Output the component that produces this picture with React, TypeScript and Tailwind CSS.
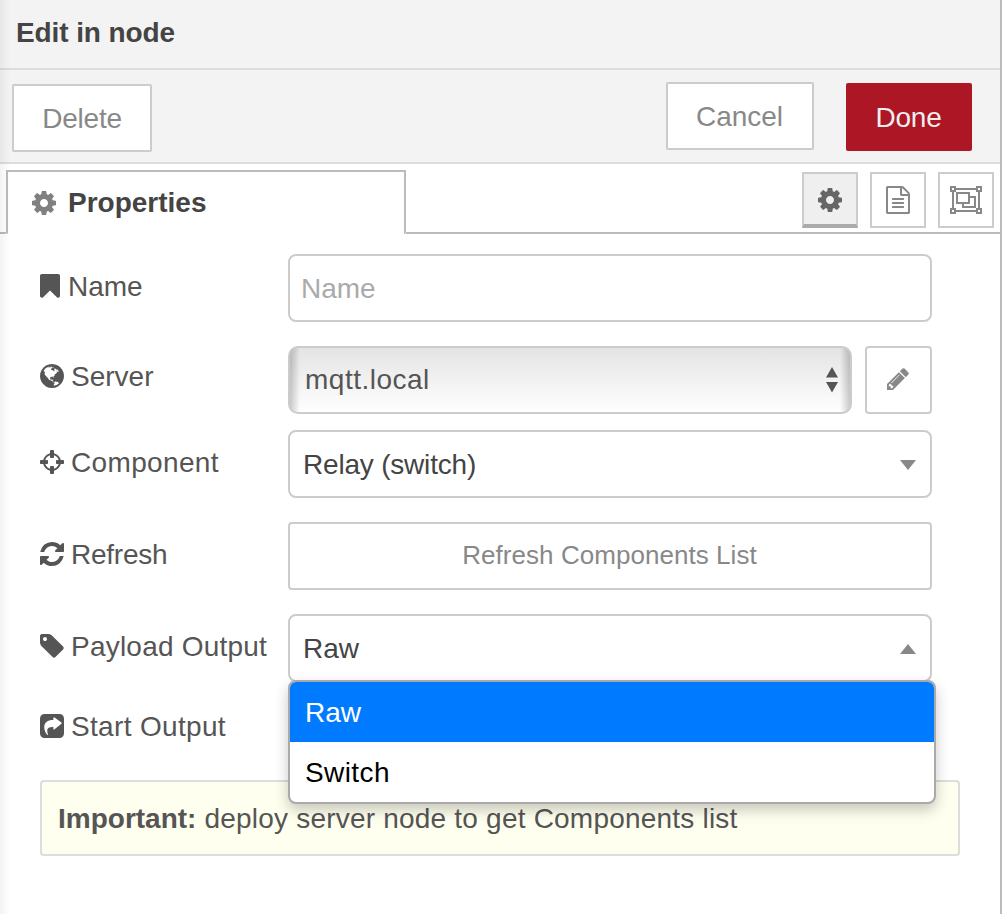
import React from "react";

const P = {
  cog: "M1152 896q0-106-75-181t-181-75-181 75-75 181 75 181 181 75 181-75 75-181zm512-109v222q0 12-8 23t-20 13l-185 28q-19 54-39 91 35 50 107 138 10 12 10 25t-9 23q-27 37-99 108t-94 71q-12 0-26-9l-138-108q-44 23-91 38-16 136-29 186-7 28-36 28h-222q-14 0-24.5-8.5t-11.5-21.5l-28-184q-49-16-90-37l-141 107q-10 9-25 9-14 0-25-11-126-114-165-168-7-10-7-23 0-12 8-23 15-21 51-66.5t54-70.5q-27-50-41-99l-183-27q-13-2-21-12.5t-8-23.5v-222q0-12 8-23t19-13l186-28q14-46 39-92-40-57-107-138-10-12-10-24 0-10 9-23 26-36 98.5-107.5t94.5-71.5q13 0 26 10l138 107q44-23 91-38 16-136 29-186 7-28 36-28h222q14 0 24.5 8.5t11.5 21.5l28 184q49 16 90 37l142-107q9-9 24-9 13 0 25 10 129 119 165 170 7 8 7 22 0 12-8 23-15 21-51 66.5t-54 70.5q26 50 41 98l183 28q13 2 21 12.5t8 23.5z",
  bookmark: "M1420 128q23 0 44 9 33 13 52.5 41t19.5 62v1289q0 34-19.5 62t-52.5 41q-19 8-44 8-48 0-83-32l-441-424-441 424q-36 33-83 33-23 0-44-9-33-13-52.5-41t-19.5-62v-1289q0-34 19.5-62t52.5-41q21-9 44-9h1048z",
  globe: "M896 128q209 0 385.5 103t279.5 279.5 103 385.5-103 385.5-279.5 279.5-385.5 103-385.5-103-279.5-279.5-103-385.5 103-385.5 279.5-279.5 385.5-103zm274 521q-2 1-9.5 9.5t-13.5 9.5q2 0 4.5-5t5-11 3.5-7q6-7 22-15 14-6 52-12 34-8 51 11-2-2 9.5-13t14.5-12q3-2 15-4.5t15-7.5l2-22q-12 1-17.5-7t-6.5-21q0 2-6 8 0-7-4.5-8t-11.5 1-9 1q-10-3-15-7.5t-8-16.5-4-15q-2-5-9.5-11t-9.5-10q-1-2-2.5-5.5t-3-6.5-4-5.5-5.5-2.5-7 5-7.5 10-4.5 5q-3-2-6-1.5t-4.5 1-4.5 3-5 3.5q-3 2-8.5 3t-8.5 2q15-5-1-11-10-4-16-3 9-4 7.5-12t-8.5-14h5q-1-4-8.5-8.5t-17.5-8.5-13-6q-8-5-34-9.5t-33-.5q-5 6-4.5 10.5t4 14 3.5 12.5q1 6-5.5 13t-6.5 12q0 7 14 15.5t10 21.5q-3 8-16 16t-16 12q-5 8-1.5 18.5t10.5 16.5q2 2 1.5 4t-3.5 4.5-5.5 4-6.5 3.5l-3 2q-11 5-20.5-6t-13.5-26q-7-25-16-30-23-8-29 1-5-13-41-26-25-9-58-4 6-1 0-15-7-15-19-12 3-6 4-17.5t1-13.5q3-13 12-23 1-1 7-8.5t9.5-13.5.5-6q35 4 50-11 5-5 11.5-17t10.5-17q9-6 14-5.5t14.5 5.5 14.5 5q14 1 15.5-11t-7.5-20q12 1 3-17-4-7-8-9-12-4-27 5-8 4 2 8-1-1-9.5 10.5t-16.5 17.5-16-5q-1-1-5.5-13.5t-9.5-13.5q-8 0-16 15 3-8-11-15t-24-8q19-12-8-27-7-4-20.5-5t-19.5 4q-5 7-5.5 11.5t5 8 10.5 5.5 11.5 4 8.5 3q14 10 8 14-2 1-8.5 3.5t-11.5 4.5-6 4q-3 4 0 14t-2 14q-5-5-9-17.5t-7-16.5q7 9-25 6l-10-1q-4 0-16 2t-20.5 1-13.5-8q-4-8 0-20 1-4 4-2-4-3-11-9.5t-10-8.5q-46 15-94 41 6 1 12-1 5-2 13-6.5t10-5.5q34-14 42-7l5-5q14 16 20 25-7-4-30-1-20 6-22 12 7 12 5 18-4-3-11.5-10t-14.5-11-15-5q-16 0-22 1-146 80-235 222 7 7 12 8 4 1 5 9t2.5 11 11.5-3q9 8 3 19 1-1 44 27 19 17 21 21 3 11-10 18-1-2-9-9t-9-4q-3 5 .5 18.5t10.5 12.5q-7 0-9.5 16t-2.5 35.5-1 23.5l2 1q-3 12 5.5 34.5t21.5 19.5q-13 3 20 43 6 8 8 9 3 2 12 7.5t15 10 10 10.5q4 5 10 22.5t14 23.5q-2 6 9.5 20t10.5 23q-1 0-2.5 1t-2.5 1q3 7 15.5 14t15.5 13q1 3 2 10t3 11 8 2q2-20-24-62-15-25-17-29-3-5-5.5-15.5t-4.5-14.5q2 0 6 1.5t8.5 3.5 7.5 4 2 3q-3 7 2 17.5t12 18.5 17 19 12 13q6 6 14 19.5t0 13.5q9 0 20 10.5t17 19.5q5 8 8 26t5 24q2 7 8.5 13.5t12.5 9.5l16 8 13 7q5 2 18.5 10.5t21.5 11.5q10 4 16 4t14.5-2.5 13.5-3.5q15-2 29 15t21 21q36 19 55 11-2 1 .5 7.5t8 15.5 9 14.5 5.5 8.5q5 6 18 15t18 15q6-4 7-9-3 8 7 20t18 10q14-3 14-32-31 15-49-18 0-1-2.5-5.5t-4-8.5-2.5-8.5 0-7.5 5-3q9 0 10-3.5t-2-12.5-4-13q-1-8-11-20t-12-15q-5 9-16 8t-16-9q0 1-1.5 5.5t-1.5 6.5q-13 0-15-1 1-3 2.5-17.5t3.5-22.5q1-4 5.5-12t7.5-14.5 4-12.5-4.5-9.5-17.5-2.5q-19 1-26 20-1 3-3 10.5t-5 11.5-9 7q-7 3-24 2t-24-5q-13-8-22.5-29t-9.5-37q0-10 2.5-26.5t3-25-5.5-24.5q3-2 9-9.5t10-10.5q2-1 4.5-1.5t4.5 0 4-1.5 3-6q-1-1-4-3-3-3-4-3 7 3 28.5-1.5t27.5 1.5q15 11 22-2 0-1-2.5-9.5t-.5-13.5q5 27 29 9 3 3 15.5 5t17.5 5q3 2 7 5.5t5.5 4.5 5-.5 8.5-6.5q10 14 12 24 11 40 19 44 7 3 11 2t4.5-9.5 0-14-1.5-12.5l-1-8v-18l-1-8q-15-3-18.5-12t1.5-18.5 15-18.5q1-1 8-3.5t15.5-6.5 12.5-8q21-19 15-35 7 0 11-9-1 0-5-3t-7.5-5-4.5-2q9-5 2-16 5-3 7.5-11t7.5-10q9 12 21 2 8-8 1-16 5-7 20.5-10.5t18.5-9.5q7 2 8-2t1-12 3-12q4-5 15-9t13-5l17-11q3-4 0-4 18 2 31-11 10-11-6-20 3-6-3-9.5t-15-5.5q3-1 11.5-.5t10.5-1.5q15-10-7-16-17-5-43 12zm-163 877q206-36 351-189-3-3-12.5-4.5t-12.5-3.5q-18-7-24-8 1-7-2.5-13t-8-9-12.5-8-11-7q-2-2-7-6t-7-5.5-7.5-4.5-8.5-2-10 1l-3 1q-3 1-5.5 2.5t-5.5 3-4 3 0 2.5q-21-17-36-22-5-1-11-5.5t-10.5-7-10-1.5-11.5 7q-5 5-6 15t-2 13q-7-5 0-17.5t2-18.5q-3-6-10.5-4.5t-12 4.5-11.5 8.5-9 6.5-8.5 5.5-8.5 7.5q-3 4-6 12t-5 11q-2-4-11.5-6.5t-9.5-5.5q2 10 4 35t5 38q7 31-12 48-27 25-29 40-4 22 12 26 0 7-8 20.5t-7 21.5q0 6 2 16z",
  crosshairs: "M1325 1024h-109q-26 0-45-19t-19-45v-128q0-26 19-45t45-19h109q-32-108-112.5-188.5t-188.5-112.5v109q0 26-19 45t-45 19h-128q-26 0-45-19t-19-45v-109q-108 32-188.5 112.5t-112.5 188.5h109q26 0 45 19t19 45v128q0 26-19 45t-45 19h-109q32 108 112.5 188.5t188.5 112.5v-109q0-26 19-45t45-19h128q26 0 45 19t19 45v109q108-32 188.5-112.5t112.5-188.5zm339-192v128q0 26-19 45t-45 19h-143q-37 161-154.5 278.5t-278.5 154.5v143q0 26-19 45t-45 19h-128q-26 0-45-19t-19-45v-143q-161-37-278.5-154.5t-154.5-278.5h-143q-26 0-45-19t-19-45v-128q0-26 19-45t45-19h143q37-161 154.5-278.5t278.5-154.5v-143q0-26 19-45t45-19h128q26 0 45 19t19 45v143q161 37 278.5 154.5t154.5 278.5h143q26 0 45 19t19 45z",
  refresh: "M1639 1056q0 5-1 7-64 268-268 434.5t-478 166.5q-146 0-282.5-55t-243.5-157l-129 129q-19 19-45 19t-45-19-19-45v-448q0-26 19-45t45-19h448q26 0 45 19t19 45-19 45l-137 137q71 66 161 102t187 36q134 0 250-65t186-179q11-17 53-117 8-23 30-23h192q13 0 22.5 9.5t9.5 22.5zm25-800v448q0 26-19 45t-45 19h-448q-26 0-45-19t-19-45 19-45l138-138q-148-137-349-137-134 0-250 65t-186 179q-11 17-53 117-8 23-30 23h-199q-13 0-22.5-9.5t-9.5-22.5v-7q65-268 270-434.5t480-166.5q146 0 284 55.5t245 156.5l130-129q19-19 45-19t45 19 19 45z",
  tag: "M576 448q0-53-37.5-90.5t-90.5-37.5-90.5 37.5-37.5 90.5 37.5 90.5 90.5 37.5 90.5-37.5 37.5-90.5zm1067 576q0 53-37 90l-491 492q-39 37-91 37-53 0-90-37l-715-716q-38-37-64.5-101t-26.5-117v-416q0-52 38-90t90-38h416q53 0 117 26.5t102 64.5l715 714q37 39 37 91z",
  share: "M416 128h960q119 0 203.500 84.500t84.500 203.500v960q0 119-84.500 203.500t-203.500 84.500h-960q-119 0-203.500-84.500t-84.500-203.500v-960q0-119 84.500-203.500t203.500-84.500zM1005 345q-25 12-25 45v122c-390 0-580 170-580 470 0 170 70 350 200 485 22 18 42 6 34-24-28-110-42-180-42-240 0-190 110-251 388-251v122q0 33 25 45 28 12 52-10l442-350q40-45 0-90l-442-314q-24-22-52-10z",
  pencil: "M491 1536l91-91-235-235-91 91v107h128v128h107zm523-928q0-22-22-22-10 0-17 7l-542 542q-7 7-7 17 0 22 22 22 10 0 17-7l542-542q7-7 7-17zm-54-192l416 416-832 832h-416v-416zm683 96q0 53-37 90l-166 166-416-416 166-165q36-38 90-38 53 0 91 38l235 234q37 39 37 91z",
  file: "M1596 380q28 28 48 76t20 88v1152q0 40-28 68t-68 28h-1344q-40 0-68-28t-28-68v-1600q0-40 28-68t68-28h896q40 0 88 20t76 48zm-444-244v376h376q-10-29-22-41l-313-313q-12-12-41-22zm384 1528v-1024h-416q-40 0-68-28t-28-68v-416h-768v1536h1280zm-1024-864q0-14 9-23t23-9h704q14 0 23 9t9 23v64q0 14-9 23t-23 9h-704q-14 0-23-9t-9-23v-64zm736 224q14 0 23 9t9 23v64q0 14-9 23t-23 9h-704q-14 0-23-9t-9-23v-64q0-14 9-23t23-9h704zm0 256q14 0 23 9t9 23v64q0 14-9 23t-23 9h-704q-14 0-23-9t-9-23v-64q0-14 9-23t23-9h704z",
};

function Icon({ d, className = "" }: { d: string; className?: string }) {
  return (
    <svg viewBox="128 0 1536 1792" className={`h-7 w-6 shrink-0 ${className}`} fill="currentColor" fillRule="evenodd">
      <path d={d} />
    </svg>
  );
}

function ObjectGroup() {
  return (
    <svg viewBox="0 0 32 28" className="h-7 w-8 shrink-0" fill="none" stroke="currentColor" strokeWidth="2">
      <path d="M5 3H27M5 25H27M3 5V23M29 5V23" />
      <path d="M1 1h4v4H1zM27 1h4v4h-4zM1 23h4v4H1zM27 23h4v4h-4z" />
      <path d="M7 7h12v10H7zM19 11h6v10H13v-4" />
    </svg>
  );
}

function Label({ icon, text, shift = "" }: { icon: string; text: string; shift?: string }) {
  return (
    <div className={`flex w-[248px] items-center text-[#555] ${shift}`}>
      <Icon d={icon} />
      <span className="ml-[7px] whitespace-nowrap pt-0.5 leading-8">{text}</span>
    </div>
  );
}

const field = "flex h-[68px] w-[644px] border-2 border-[#ccc] bg-white items-center";

export default function App() {
  return (
    <div className="relative h-[914px] w-[1002px] overflow-hidden border-r-2 border-[#bbb] bg-white font-['Liberation_Sans',Arial,sans-serif] text-[28px] leading-8 text-[#444]">
      <header className="h-[70px] border-b-2 border-[#ddd] bg-[#f3f3f3] pl-4 pt-[17px] font-bold tracking-[-0.1px]">
        Edit in node
      </header>

      <div className="flex h-[94px] items-start border-b-2 border-[#ddd] bg-[#f3f3f3] pl-3 pr-7 pt-3 text-[#888]">
        <button className="mt-0.5 h-[68px] w-[140px] rounded-[2px] border-2 border-[#ccc] bg-white pt-0.5 tracking-[-0.2px]">Delete</button>
        <button className="ml-auto h-[68px] w-[148px] rounded-[2px] border-2 border-[#ccc] bg-white pr-px pt-0.5">Cancel</button>
        <button className="ml-8 mt-px h-[68px] w-[126px] rounded-[2px] bg-[#ad1625] pr-px pt-0.5 tracking-[-0.2px] text-[#eee]">Done</button>
      </div>

      <div className="flex h-[70px] pt-1.5">
        <div className="w-1.5 border-b-2 border-[#bbb]" />
        <div className="flex w-[400px] items-center rounded-b-[2px] border-2 border-b-0 border-[#bbb] pb-px pl-6 font-bold">
          <Icon d={P.cog} className="text-[#808080]" />
          <span className="ml-3">Properties</span>
        </div>
        <div className="flex flex-1 justify-end gap-3 border-b-2 border-[#bbb] pr-1.5 pt-0.5 text-[#888]">
          <button className="flex size-14 items-center justify-center border-2 border-b-4 border-[#ccc] border-b-[#aaa] bg-[#efefef] pr-px pt-0.5 text-[#666]">
            <Icon d={P.cog} />
          </button>
          <button className="flex size-14 items-center justify-center border-2 border-[#ccc] pr-px">
            <Icon d={P.file} />
          </button>
          <button className="flex size-14 items-center justify-center border-2 border-[#ccc] pr-px">
            <ObjectGroup />
          </button>
        </div>
      </div>

      <main className="pl-10 pt-5">
        <div className="flex">
          <div className="flex w-[248px] items-center pb-1 text-[#555]">
            <svg viewBox="256 0 1280 1792" className="h-7 w-5" fill="currentColor">
              <path d={P.bookmark} />
            </svg>
            <span className="ml-2 pt-0.5">Name</span>
          </div>
          <div className={`${field} rounded-lg pl-[11px] pt-0.5 text-[#aaa]`}>Name</div>
        </div>

        <div className="mt-6 flex">
          <Label icon={P.globe} text="Server" shift="pb-2" />
          <div className="relative flex h-[68px] w-[564px] items-center overflow-hidden rounded-[10px] border-2 border-[#ccc] bg-linear-to-b from-[#e4e4e4] to-white pl-[15px] pr-[11px] tracking-[0.5px] text-[#555]">
            <div className="absolute inset-y-0 left-0 w-2.5 bg-linear-to-r from-black/20 to-transparent" />
            <div className="absolute inset-y-0 right-0 w-2.5 bg-linear-to-l from-black/20 to-transparent" />
            mqtt.local
            <svg viewBox="0 0 14 26" className="ml-auto h-[26px] w-3.5" fill="#555">
              <path d="M7 0L13 10.500H1zM1 15h12L7 25.500z" />
            </svg>
          </div>
          <button className="ml-[13px] flex h-[68px] w-[67px] items-center justify-center rounded-[4px] border-2 border-[#ccc] pb-0.5 pr-0.5 text-[#888]">
            <svg viewBox="128 128 1536 1536" className="size-[22px]" fill="currentColor">
              <path d={P.pencil} />
            </svg>
          </button>
        </div>

        <div className="mt-4 flex">
          <Label icon={P.crosshairs} text="Component" shift="pb-1 tracking-[0.35px]" />
          <div className={`${field} rounded-lg pl-[13px] pr-3.5 pt-0.5 tracking-[-0.2px]`}>
            Relay (switch)
            <svg viewBox="0 0 16 10" className="ml-auto h-2.5 w-4" fill="#888">
              <path d="M0 0h16L8 10z" />
            </svg>
          </div>
        </div>

        <div className="mt-6 flex">
          <Label icon={P.refresh} text="Refresh" shift="pb-1 tracking-[-0.25px]" />
          <button className={`${field} justify-center rounded-[4px] pb-0.5 pr-px text-[26px] tracking-[0.05px] text-[#888]`}>
            Refresh Components List
          </button>
        </div>

        <div className="mt-6 flex">
          <Label icon={P.tag} text="Payload Output" shift="pb-1 tracking-[0.22px]" />
          <div className={`relative ${field} rounded-lg pl-[13px] pr-3.5 pt-0.5`}>
            Raw
            <svg viewBox="0 0 16 10" className="ml-auto h-2.5 w-4" fill="#888">
              <path d="M0 10h16L8 0z" />
            </svg>
            <ul className="absolute -left-0.5 top-16 z-10 w-[648px] overflow-hidden rounded-lg border-2 border-[#aaa] bg-white text-black shadow-[0_6px_14px_rgba(0,0,0,0.22)]">
              <li className="flex h-[60px] items-center bg-[#007bff] pl-[15px] pt-0.5 text-white">Raw</li>
              <li className="flex h-[60px] items-center pl-[15px] pt-0.5 tracking-[0.4px]">Switch</li>
            </ul>
          </div>
        </div>

        <div className="mt-[27px] flex">
          <Label icon={P.share} text="Start Output" shift="tracking-[0.33px]" />
        </div>

        <div className="mt-[37px] flex h-[76px] w-[920px] items-center rounded-[4px] border-2 border-[#ddd] bg-[#ffffef] pl-4 pt-0.5 text-[#555]">
          <p className="whitespace-pre tracking-[0.21px]">
            <b className="tracking-normal">Important:</b> deploy server node to get Components list
          </p>
        </div>
      </main>
      <div className="absolute inset-y-0 left-0 w-2.5 bg-linear-to-r from-black/5 to-transparent" />
    </div>
  );
}
